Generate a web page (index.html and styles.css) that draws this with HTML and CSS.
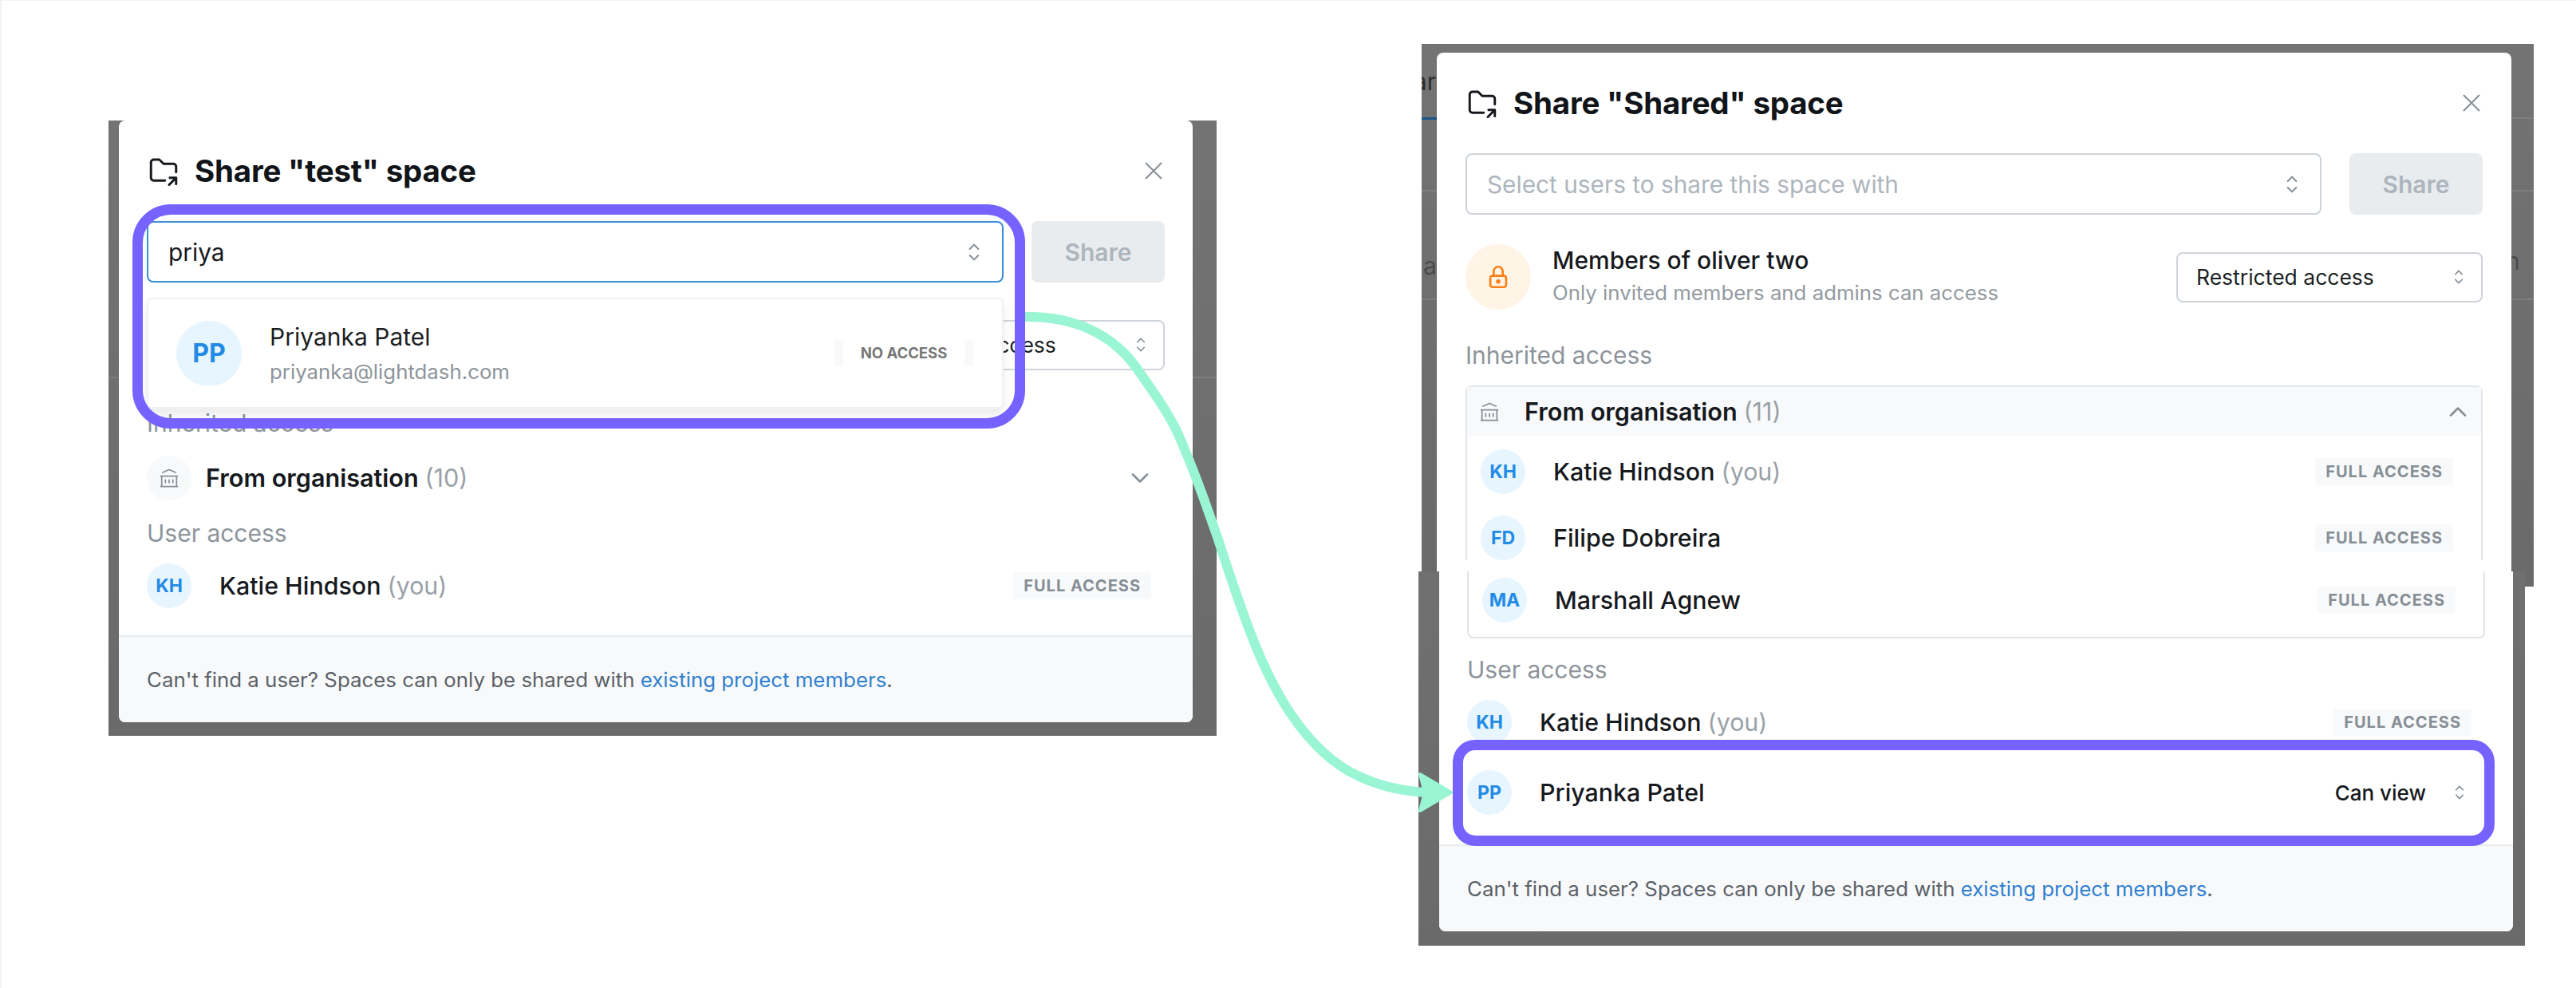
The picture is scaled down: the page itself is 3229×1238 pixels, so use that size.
FILE: index.html
```html
<!DOCTYPE html>
<html lang="en">
<head>
    <meta charset="UTF-8">
    <title>Share space</title>
    <link rel="stylesheet" href="styles.css">
</head>
<body>
    <svg class="sprite" width="0" height="0">
        <symbol id="i-folder" viewBox="0 0 24 24"><path d="M13 19h-8a2 2 0 0 1 -2 -2v-11a2 2 0 0 1 2 -2h4l3 3h7a2 2 0 0 1 2 2v4M16 22l5 -5M21 21.5v-4.5h-4.5"/></symbol>
        <symbol id="i-x" viewBox="0 0 24 24"><path d="M18 6l-12 12M6 6l12 12"/></symbol>
        <symbol id="i-selector" viewBox="0 0 24 24"><path d="M8 9l4 -4l4 4M16 15l-4 4l-4 -4"/></symbol>
        <symbol id="i-down" viewBox="0 0 24 24"><path d="M6 9l6 6l6 -6"/></symbol>
        <symbol id="i-up" viewBox="0 0 24 24"><path d="M6 15l6 -6l6 6"/></symbol>
        <symbol id="i-bank" viewBox="0 0 24 24"><path d="M3 21h18M3 10h18M5 6l7 -3l7 3M4 10v11M20 10v11M8 14v3M12 14v3M16 14v3"/></symbol>
        <symbol id="i-lock" viewBox="0 0 24 24"><path d="M5 13a2 2 0 0 1 2 -2h10a2 2 0 0 1 2 2v6a2 2 0 0 1 -2 2h-10a2 2 0 0 1 -2 -2v-6zM11 16a1 1 0 1 0 2 0a1 1 0 0 0 -2 0M8 11v-4a4 4 0 1 1 8 0v4"/></symbol>
    </svg>

    <div class="canvas">
        <!-- left screenshot -->
        <section class="shot shot-left">
            <i class="rule rule-left-a"></i>
            <div class="modal">
                <div class="modal-body">
                    <header class="modal-header">
                        <svg class="icon icon-folder"><use href="#i-folder"/></svg>
                        <h2>Share "test" space</h2>
                        <svg class="icon icon-close"><use href="#i-x"/></svg>
                    </header>
                    <div class="share-row">
                        <div class="input input-focus">
                            <span class="input-value">priya</span>
                            <svg class="icon icon-selector"><use href="#i-selector"/></svg>
                        </div>
                        <div class="share-btn">Share</div>
                    </div>
                    <div class="access-row">
                        <div class="select">
                            <span>Restricted access</span>
                            <svg class="icon icon-selector-sm"><use href="#i-selector"/></svg>
                        </div>
                    </div>
                    <p class="label">Inherited access</p>
                    <div class="org-row">
                        <span class="avatar avatar-grey"><svg class="icon icon-bank"><use href="#i-bank"/></svg></span>
                        <span class="name name-org">From organisation <em>(10)</em></span>
                        <svg class="icon icon-chevron"><use href="#i-down"/></svg>
                    </div>
                    <p class="label label-user">User access</p>
                    <div class="user-row user-row-first">
                        <span class="avatar">KH</span>
                        <span class="name">Katie Hindson <em>(you)</em></span>
                        <span class="badge">FULL ACCESS</span>
                    </div>
                </div>
                <footer class="modal-footer">Can't find a user? Spaces can only be shared with <a href="#members">existing project members</a>.</footer>

                <div class="dropdown">
                    <span class="avatar avatar-lg">PP</span>
                    <div class="dropdown-text">
                        <div class="dropdown-name">Priyanka Patel</div>
                        <div class="dropdown-mail">priyanka@lightdash.com</div>
                    </div>
                    <span class="badge-none"><b>NO ACCESS</b></span>
                </div>
            </div>
        </section>

        <!-- right screenshot, upper half -->
        <section class="shot shot-top">
            <span class="peek peek-ar">ar</span>
            <span class="peek peek-a">a</span>
            <span class="peek peek-n">n</span>
            <i class="rule rule-tab"></i>
            <i class="rule rule-top-a"></i>
            <i class="rule rule-top-b"></i>
            <i class="rule rule-top-c"></i>
            <div class="modal">
                <div class="modal-body">
                    <header class="modal-header">
                        <svg class="icon icon-folder"><use href="#i-folder"/></svg>
                        <h2>Share "Shared" space</h2>
                        <svg class="icon icon-close"><use href="#i-x"/></svg>
                    </header>
                    <div class="share-row">
                        <div class="input">
                            <span class="input-placeholder">Select users to share this space with</span>
                            <svg class="icon icon-selector"><use href="#i-selector"/></svg>
                        </div>
                        <div class="share-btn">Share</div>
                    </div>
                    <div class="access-row">
                        <span class="avatar avatar-lg avatar-orange"><svg class="icon icon-lock"><use href="#i-lock"/></svg></span>
                        <div class="access-text">
                            <div class="access-title">Members of oliver two</div>
                            <div class="access-sub">Only invited members and admins can access</div>
                        </div>
                        <div class="select">
                            <span>Restricted access</span>
                            <svg class="icon icon-selector-sm"><use href="#i-selector"/></svg>
                        </div>
                    </div>
                    <p class="label">Inherited access</p>
                    <div class="org-box">
                        <div class="org-head">
                            <svg class="icon icon-bank"><use href="#i-bank"/></svg>
                            <span class="name name-org">From organisation <em>(11)</em></span>
                            <svg class="icon icon-chevron"><use href="#i-up"/></svg>
                        </div>
                        <div class="org-list">
                            <div class="user-row">
                                <span class="avatar">KH</span>
                                <span class="name">Katie Hindson <em>(you)</em></span>
                                <span class="badge">FULL ACCESS</span>
                            </div>
                            <div class="user-row">
                                <span class="avatar">FD</span>
                                <span class="name">Filipe Dobreira</span>
                                <span class="badge">FULL ACCESS</span>
                            </div>
                        </div>
                    </div>
                </div>
            </div>
        </section>

        <!-- right screenshot, lower half pasted over it -->
        <section class="shot shot-bottom">
            <div class="modal">
                <div class="modal-body">
                    <div class="org-tail">
                        <div class="user-row">
                            <span class="avatar">MA</span>
                            <span class="name">Marshall Agnew</span>
                            <span class="badge">FULL ACCESS</span>
                        </div>
                    </div>
                    <p class="label label-user">User access</p>
                    <div class="user-row user-row-first">
                        <span class="avatar">KH</span>
                        <span class="name">Katie Hindson <em>(you)</em></span>
                        <span class="badge">FULL ACCESS</span>
                    </div>
                    <div class="user-row user-row-new">
                        <span class="avatar">PP</span>
                        <span class="name">Priyanka Patel</span>
                        <span class="role">Can view</span>
                        <svg class="icon icon-selector-sm"><use href="#i-selector"/></svg>
                    </div>
                </div>
                <footer class="modal-footer">Can't find a user? Spaces can only be shared with <a href="#members">existing project members</a>.</footer>
            </div>
        </section>

        <!-- annotations -->
        <svg class="arrow" viewBox="0 0 3229 1238">
            <path class="arrow-line" d="M1285 397C1345 396 1395 418 1426 463C1452 500 1470 525 1482 556C1505 610 1514 640 1526 673C1538 710 1548 740 1560 773C1575 815 1595 860 1617 893C1642 930 1670 958 1704 973C1730 985 1760 992 1790 993"/>
            <path class="arrow-head" d="M1780 970L1819 993L1780 1016L1786 993Z"/>
        </svg>
        <div class="outline outline-left"></div>
        <div class="outline outline-right"></div>
    </div>
</body>
</html>
```

FILE: styles.css
```css
body {
    margin: 0;
    background-color: #fff;
    font-family: Inter, "Liberation Sans", sans-serif;
    color: #16191d;
}

p, h2 {
    margin: 0;
}

.sprite {
    position: absolute;
}

.canvas {
    position: relative;
    width: 3229px;
    height: 1238px;
    overflow: hidden;
    box-sizing: border-box;
    border-left: 2px solid #f3f3f3;
    border-top: 1px solid #f3f3f3;
}

/* pasted screenshots */
.shot {
    position: absolute;
    background: linear-gradient(#737373, #6a6a6a);
    box-sizing: border-box;
}

.shot-left {
    left: 134px;
    top: 150px;
    width: 1389px;
    height: 771px;
    padding-left: 13px;
}

.shot-top {
    left: 1780px;
    top: 54px;
    width: 1394px;
    height: 680px;
    padding: 11px 0 0 19px;
}

.shot-bottom {
    left: 1776px;
    top: 715px;
    width: 1387px;
    height: 469px;
    padding-left: 26px;
    background: linear-gradient(#707070, #6a6a6a);
}

.rule {
    position: absolute;
    left: 0;
    right: 0;
    height: 2px;
    background-color: #7e7e7e;
}

.rule-left-a { top: 321px; }
.rule-top-a { top: 92px; }
.rule-top-b { top: 183px; }
.rule-top-c { top: 319px; }

.rule-tab {
    top: 92px;
    width: 19px;
    height: 3px;
    right: auto;
    background-color: #1a5688;
    z-index: 1;
}

.peek {
    position: absolute;
    font-size: 30px;
    color: #2e2e2e;
    line-height: 40px;
}

.peek-ar { left: 0; top: 27px; width: 18px; overflow: hidden; direction: rtl; }
.peek-a { left: 2px; top: 258px; color: #4b4b4b; }
.peek-n { left: 1359px; top: 252px; color: #4b4b4b; }

/* modal */
.modal {
    position: relative;
    display: flex;
    flex-direction: column;
    width: 1346px;
    height: 754px;
    background-color: #fff;
    border-radius: 8px;
    overflow: hidden;
}

.shot-top .modal {
    width: 1347px;
    height: 669px;
    border-radius: 8px 8px 0 0;
}

.shot-bottom .modal {
    height: 451px;
    border-radius: 0 0 8px 8px;
}

.modal-body {
    padding: 37px 35px 0;
    flex: 1;
}

.shot-top .modal-body {
    padding: 37px 36px 0;
}

.shot-bottom .modal-body {
    padding-top: 0;
}

.modal-header {
    display: flex;
    align-items: center;
    gap: 18px;
    height: 52px;
    margin-bottom: 37px;
}

.modal-header h2 {
    flex: 1;
    font-size: 38.5px;
    font-weight: 700;
    letter-spacing: -0.2px;
    color: #111418;
}

.icon {
    fill: none;
    stroke: #868e96;
    stroke-width: 1.5;
    stroke-linecap: round;
    stroke-linejoin: round;
    flex: none;
}

.icon-folder {
    width: 42px;
    height: 42px;
    stroke: #16191d;
    stroke-width: 1.7;
}

.icon-close {
    width: 38px;
    height: 38px;
    stroke-width: 1.25;
    margin-right: -5px;
}

.icon-selector {
    width: 32px;
    height: 32px;
}

.icon-selector-sm {
    width: 26px;
    height: 26px;
}

.icon-chevron {
    width: 36px;
    height: 36px;
    margin-left: auto;
    margin-right: 13px;
    stroke-width: 1.7;
}

.icon-bank {
    width: 28px;
    height: 28px;
}

.icon-lock {
    width: 34px;
    height: 34px;
    stroke: #fd7e14;
    stroke-width: 1.9;
}

/* share row */
.share-row {
    display: flex;
    gap: 35px;
    height: 77px;
}

.input {
    flex: 1;
    display: flex;
    align-items: center;
    justify-content: space-between;
    box-sizing: border-box;
    padding: 0 19px 0 25px;
    border: 2px solid #ced4da;
    border-radius: 8px;
    font-size: 29.8px;
}

.input-focus {
    border-color: #3a8fd8;
}

.input-placeholder {
    color: #adb5bd;
}

.share-btn {
    display: flex;
    align-items: center;
    justify-content: center;
    width: 167px;
    background-color: #e9ecef;
    border-radius: 8px;
    font-size: 30px;
    font-weight: 600;
    color: #adb5bd;
}

/* access row */
.access-row {
    display: flex;
    align-items: center;
    justify-content: flex-end;
    min-height: 82px;
    margin-top: 37px;
    gap: 27px;
}

.access-text {
    flex: 1;
}

.access-title {
    font-size: 30px;
    font-weight: 500;
    line-height: 40px;
}

.access-sub {
    font-size: 25.8px;
    color: #939aa1;
    line-height: 42px;
}

.select {
    display: flex;
    align-items: center;
    justify-content: space-between;
    box-sizing: border-box;
    width: 384px;
    height: 63px;
    padding: 0 15px 0 23px;
    border: 2px solid #ced4da;
    border-radius: 8px;
    font-size: 26.5px;
    color: #1c1f23;
}

.label {
    margin-top: 37px;
    font-size: 30px;
    line-height: 40px;
    color: #8d949b;
}

.label-user {
    margin-top: 21px;
}

.shot-bottom .label-user {
    margin-top: 19px;
}

/* people */
.avatar {
    display: flex;
    align-items: center;
    justify-content: center;
    flex: none;
    width: 56px;
    height: 56px;
    border-radius: 50%;
    background-color: #e7f5ff;
    color: #228be6;
    font-size: 23px;
    font-weight: 700;
}

.avatar-grey {
    background-color: #f8f9fa;
}

.avatar-lg {
    width: 82px;
    height: 82px;
    font-size: 32px;
}

.avatar-orange {
    background-color: #fff4e6;
}

.name {
    font-size: 30.4px;
    font-weight: 500;
    color: #16191d;
}

.name em {
    font-style: normal;
    font-weight: 400;
    color: #9aa1a8;
}

.name-org {
    font-size: 30.6px;
    font-weight: 600;
}

.org-row {
    display: flex;
    align-items: center;
    gap: 18px;
    margin-top: 20px;
    height: 57px;
}

.user-row {
    display: flex;
    align-items: center;
    gap: 35px;
    height: 56px;
}

.user-row-first {
    margin-top: 18px;
}

.user-row-new {
    margin-top: 32px;
}

.user-row-new .role {
    margin-left: auto;
    margin-right: -6px;
    font-size: 26px;
    font-weight: 500;
}

.user-row-new .icon {
    margin-right: 19px;
}

.badge {
    margin-left: auto;
    margin-right: 17px;
    padding: 0 13px;
    height: 34px;
    line-height: 34px;
    border-radius: 4px;
    background-color: #f8f9fa;
    color: #868e96;
    font-size: 20px;
    font-weight: 700;
    letter-spacing: 1px;
    white-space: nowrap;
}

/* organisation box on the right */
.org-box {
    margin-top: 18px;
    border: 2px solid #e1e4e8;
    border-bottom: 0;
    border-radius: 8px 8px 0 0;
}

.org-head {
    display: flex;
    align-items: center;
    height: 61px;
    padding: 0 11px 0 14px;
    background-color: #f8f9fa;
}

.org-head .icon-bank {
    margin-right: 30px;
}

.org-head .icon-chevron {
    margin-right: 0;
}

.org-list {
    display: flex;
    flex-direction: column;
    gap: 27px;
    padding: 17px 0 0 17px;
}

.org-tail {
    padding: 8px 0 18px 17px;
    border: 2px solid #e1e4e8;
    border-top: 0;
    border-radius: 0 0 8px 8px;
}

.org-list .badge,
.org-tail .badge {
    margin-right: 35px;
}

/* dropdown over the left modal */
.dropdown {
    position: absolute;
    left: 35px;
    top: 222px;
    display: flex;
    align-items: center;
    box-sizing: border-box;
    width: 1074px;
    height: 139px;
    padding: 0 36px 0 35px;
    background-color: #fff;
    border: 2px solid #f0f1f3;
    border-radius: 6px;
    box-shadow: 0 8px 12px rgba(0, 0, 0, 0.08);
}

.dropdown-text {
    flex: 1;
    margin-left: 35px;
    padding-top: 3px;
}

.dropdown-name {
    font-size: 30px;
    line-height: 44px;
    color: #1c1f23;
}

.dropdown-mail {
    font-size: 25.8px;
    line-height: 44px;
    color: #8d949b;
}

.badge-none {
    padding: 0 11px;
    background-color: #f8f9fa;
    border-radius: 4px;
}

.badge-none b {
    display: block;
    width: 152px;
    height: 33px;
    line-height: 33px;
    text-align: center;
    background-color: #fff;
    color: #777;
    font-size: 18.5px;
    font-weight: 700;
}

/* footer */
.modal-footer {
    height: 107px;
    line-height: 107px;
    padding-left: 35px;
    background-color: #f8f9fa;
    border-top: 2px solid #e9ecef;
    font-size: 25.85px;
    color: #5a6168;
}

.modal-footer a {
    color: #2f7fd0;
    text-decoration: none;
}

/* annotations */
.arrow {
    position: absolute;
    left: -2px;
    top: -1px;
    width: 3229px;
    height: 1238px;
}

.arrow-line {
    fill: none;
    stroke: #9af5d4;
    stroke-width: 12;
}

.arrow-head {
    fill: #9af5d4;
    stroke: #9af5d4;
    stroke-width: 4;
    stroke-linejoin: round;
}

.outline {
    position: absolute;
    box-sizing: border-box;
    border: 13px solid #7562ff;
}

.outline-left {
    left: 164px;
    top: 255px;
    width: 1119px;
    height: 281px;
    border-radius: 48px;
}

.outline-right {
    left: 1819px;
    top: 926px;
    width: 1306px;
    height: 133px;
    border-radius: 28px;
}
```
